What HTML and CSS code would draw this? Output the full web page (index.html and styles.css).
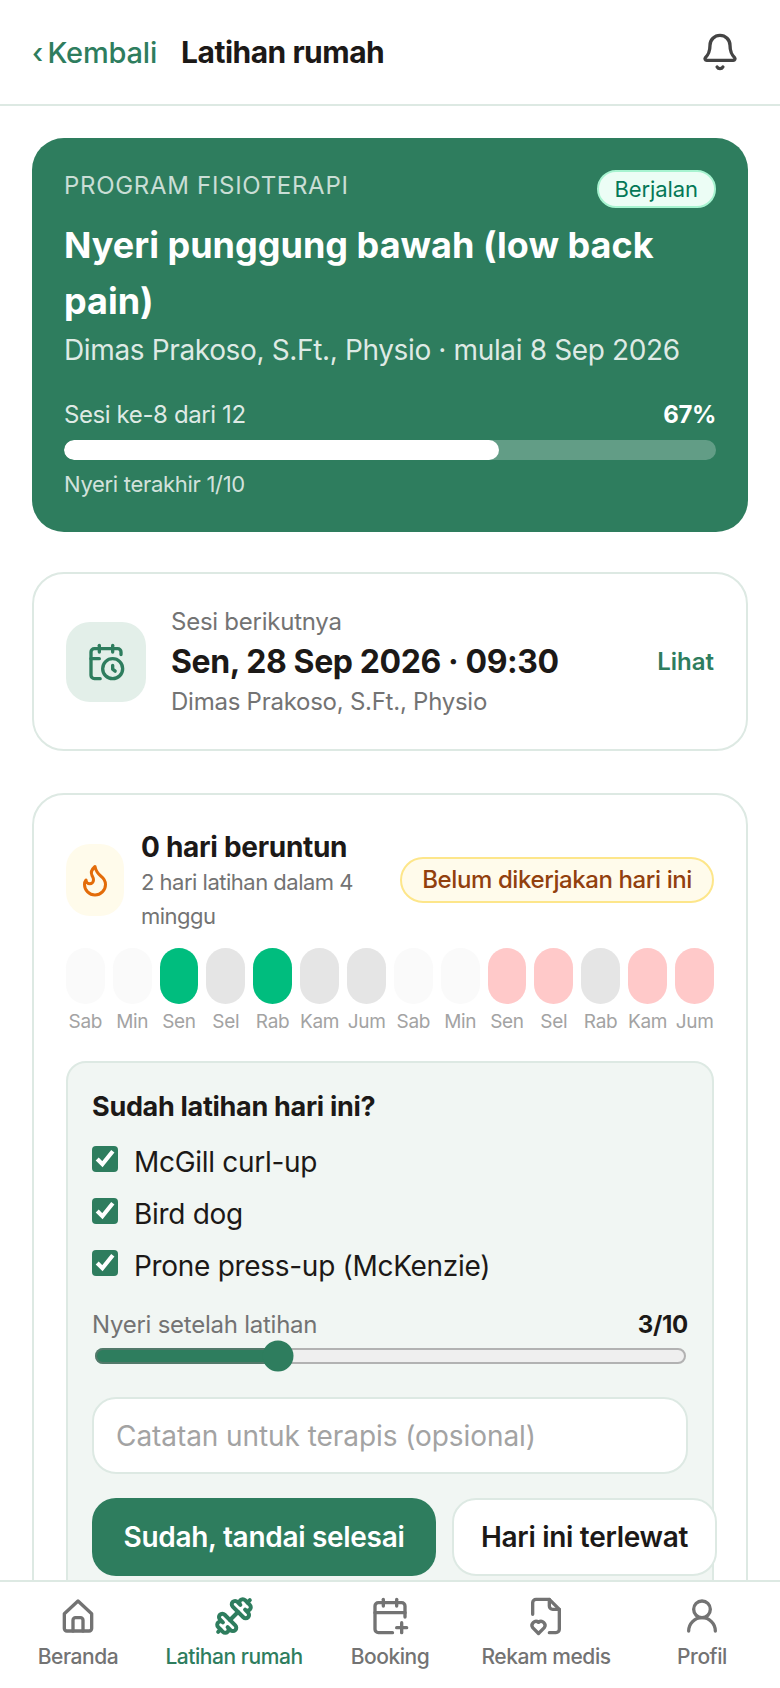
FILE: index.html
```html
<!DOCTYPE html>
<html lang="id">
<head>
  <meta charset="UTF-8">
  <meta name="viewport" content="width=device-width, initial-scale=1.0">
  <title>Latihan rumah</title>
  <link rel="stylesheet" href="styles.css">
</head>
<body>
  <header class="topbar">
    <a class="back" href="#"><span class="chev">‹</span> Kembali</a>
    <h1>Latihan rumah</h1>
    <svg class="bell" viewBox="0 0 24 24"><path d="M10.268 21a2 2 0 0 0 3.464 0"/><path d="M3.262 15.326A1 1 0 0 0 4 17h16a1 1 0 0 0 .74-1.673C19.41 13.956 18 12.499 18 8A6 6 0 0 0 6 8c0 4.499-1.411 5.956-2.738 7.326"/></svg>
  </header>

  <main class="content">
    <!-- Program aktif -->
    <section class="program">
      <div class="program-top">
        <span class="eyebrow">PROGRAM FISIOTERAPI</span>
        <span class="badge-run">Berjalan</span>
      </div>
      <h2>Nyeri punggung bawah (low back pain)</h2>
      <p class="program-sub">Dimas Prakoso, S.Ft., Physio · mulai 8 Sep 2026</p>
      <div class="progress-row">
        <span>Sesi ke-8 dari 12</span>
        <strong>67%</strong>
      </div>
      <div class="progress"><div class="progress-fill" style="width: 66.67%"></div></div>
      <p class="program-note">Nyeri terakhir 1/10</p>
    </section>

    <!-- Sesi berikutnya -->
    <section class="card next">
      <div class="next-icon">
        <svg viewBox="0 0 24 24"><path d="M21 7.5V6a2 2 0 0 0-2-2H5a2 2 0 0 0-2 2v14a2 2 0 0 0 2 2h3.5"/><path d="M16 2v4"/><path d="M8 2v4"/><path d="M3 10h5"/><path d="M17.5 17.5 16 16.3V14"/><circle cx="16" cy="16" r="6"/></svg>
      </div>
      <div class="next-text">
        <p class="muted">Sesi berikutnya</p>
        <p class="next-date">Sen, 28 Sep 2026 · 09:30</p>
        <p class="muted">Dimas Prakoso, S.Ft., Physio</p>
      </div>
      <a class="next-link" href="#">Lihat</a>
    </section>

    <!-- Streak dan form latihan -->
    <section class="card streak">
      <div class="streak-head">
        <div class="flame">
          <svg viewBox="0 0 24 24"><path d="M8.5 14.5A2.5 2.5 0 0 0 11 12c0-1.38-.5-2-1-3-1.072-2.143-.224-4.054 2-6 .5 2.5 2 4.9 4 6.5 2 1.6 3 3.5 3 5.5a7 7 0 1 1-14 0c0-1.153.433-2.294 1-3a2.5 2.5 0 0 0 2.5 2.5z"/></svg>
        </div>
        <div class="streak-text">
          <p class="streak-title">0 hari beruntun</p>
          <p class="streak-sub">2 hari latihan dalam 4 minggu</p>
        </div>
        <span class="badge-todo">Belum dikerjakan hari ini</span>
      </div>

      <div class="days">
        <div class="day"><i class="blank"></i><span>Sab</span></div>
        <div class="day"><i class="blank"></i><span>Min</span></div>
        <div class="day"><i class="done"></i><span>Sen</span></div>
        <div class="day"><i class="rest"></i><span>Sel</span></div>
        <div class="day"><i class="done"></i><span>Rab</span></div>
        <div class="day"><i class="rest"></i><span>Kam</span></div>
        <div class="day"><i class="rest"></i><span>Jum</span></div>
        <div class="day"><i class="blank"></i><span>Sab</span></div>
        <div class="day"><i class="blank"></i><span>Min</span></div>
        <div class="day"><i class="miss"></i><span>Sen</span></div>
        <div class="day"><i class="miss"></i><span>Sel</span></div>
        <div class="day"><i class="rest"></i><span>Rab</span></div>
        <div class="day"><i class="miss"></i><span>Kam</span></div>
        <div class="day"><i class="miss"></i><span>Jum</span></div>
      </div>

      <form class="today">
        <p class="today-title">Sudah latihan hari ini?</p>
        <label class="check"><input type="checkbox" checked> McGill curl-up</label>
        <label class="check"><input type="checkbox" checked> Bird dog</label>
        <label class="check"><input type="checkbox" checked> Prone press-up (McKenzie)</label>
        <div class="pain-row">
          <span>Nyeri setelah latihan</span>
          <strong>3/10</strong>
        </div>
        <input class="pain" type="range" min="0" max="10" value="3">
        <input class="note" type="text" placeholder="Catatan untuk terapis (opsional)">
        <div class="actions">
          <button class="btn-main" type="button">Sudah, tandai selesai</button>
          <button class="btn-alt" type="button">Hari ini terlewat</button>
        </div>
      </form>
    </section>
  </main>

  <nav class="tabs">
    <a class="tab" href="#">
      <svg viewBox="0 0 24 24"><path d="M3.8 10.6 12 3l8.2 7.6V19.5a1.5 1.5 0 0 1-1.5 1.5H5.3a1.5 1.5 0 0 1-1.5-1.5z"/><path d="M9 21v-6.5a1.5 1.5 0 0 1 1.5-1.5h3a1.5 1.5 0 0 1 1.5 1.5V21"/></svg>
      Beranda
    </a>
    <a class="tab active" href="#">
      <svg viewBox="0 0 24 24"><path d="M17.596 12.768a2 2 0 1 0 2.829-2.829l-1.768-1.767a2 2 0 0 0 2.828-2.829l-2.828-2.828a2 2 0 0 0-2.829 2.828l-1.767-1.768a2 2 0 1 0-2.829 2.829z"/><path d="m2.5 21.5 1.4-1.4"/><path d="m20.1 3.9 1.4-1.4"/><path d="M5.343 21.485a2 2 0 1 0 2.829-2.828l1.767 1.768a2 2 0 1 0 2.829-2.829l-6.364-6.364a2 2 0 1 0-2.829 2.829l1.768 1.767a2 2 0 0 0-2.828 2.829z"/><path d="m9.6 14.4 4.8-4.8"/></svg>
      Latihan rumah
    </a>
    <a class="tab" href="#">
      <svg viewBox="0 0 24 24"><path d="M16 19h6"/><path d="M16 2v4"/><path d="M19 16v6"/><path d="M21 12.598V6a2 2 0 0 0-2-2H5a2 2 0 0 0-2 2v14a2 2 0 0 0 2 2h8.5"/><path d="M3 10h18"/><path d="M8 2v4"/></svg>
      Booking
    </a>
    <a class="tab" href="#">
      <svg viewBox="0 0 24 24"><path d="M14 22h4a2 2 0 0 0 2-2V8l-6-6H6a2 2 0 0 0-2 2v7"/><path d="M14 2v4a2 2 0 0 0 2 2h4"/><path d="M7.5 22.5 4 19a2.4 2.4 0 0 1 3.5-3.2A2.4 2.4 0 0 1 11 19z"/></svg>
      Rekam medis
    </a>
    <a class="tab" href="#">
      <svg viewBox="0 0 24 24"><circle cx="12" cy="8" r="5"/><path d="M20 21a8 8 0 0 0-16 0"/></svg>
      Profil
    </a>
  </nav>
</body>
</html>
```

FILE: styles.css
```css
/* Estilo general */
* {
  box-sizing: border-box;
}

body {
  margin: 0;
  height: 100vh;
  overflow: hidden;
  display: flex;
  flex-direction: column;
  background: #fff;
  color: #1c1917;
  font-family: "Inter", "Noto Sans", sans-serif;
}

p, h1, h2 {
  margin: 0;
}

a {
  text-decoration: none;
}

svg {
  fill: none;
  stroke: currentColor;
  stroke-width: 2;
  stroke-linecap: round;
  stroke-linejoin: round;
}

/* Barra superior */
.topbar {
  flex: none;
  height: 106px;
  padding: 0 40px 0 32px;
  display: flex;
  align-items: center;
  gap: 24px;
  border-bottom: 2px solid #dde9e3;
}

.back {
  color: #2e7d5e;
  font-size: 29px;
  font-weight: 500;
  letter-spacing: -0.2px;
}

.chev {
  margin-right: -3px;
  font-size: 28px;
}

.topbar h1 {
  flex: 1;
  font-size: 30px;
  font-weight: 700;
  letter-spacing: -0.5px;
}

.bell {
  width: 40px;
  height: 40px;
  color: #444;
}

/* Contenido */
.content {
  flex: 1;
  min-height: 0;
  overflow: hidden;
  padding: 32px 32px 0;
}

.card {
  border: 2px solid #dde9e3;
  border-radius: 32px;
  background: #fff;
}

.muted {
  color: #737373;
  font-size: 24px;
  line-height: 32px;
  letter-spacing: -0.25px;
}

/* Programa */
.program {
  height: 394px;
  padding: 32px;
  border-radius: 32px;
  background: #2e7d5e;
  color: #fff;
}

.program-top {
  display: flex;
  justify-content: space-between;
  align-items: flex-start;
  height: 38px;
  margin-bottom: 9px;
}

.eyebrow {
  color: rgba(255, 255, 255, 0.75);
  font-size: 24px;
  line-height: 32px;
  letter-spacing: 0.7px;
}

.badge-run {
  padding: 4px 16px;
  border: 2px solid #a7f3d0;
  border-radius: 999px;
  background: #ecfdf5;
  color: #047857;
  font-size: 22px;
  line-height: 26px;
  letter-spacing: -0.1px;
}

.program h2 {
  font-size: 36px;
  line-height: 56px;
  font-weight: 700;
  letter-spacing: 0;
}

.program-sub {
  margin-top: 1px;
  color: rgba(255, 255, 255, 0.85);
  font-size: 28px;
  line-height: 40px;
  letter-spacing: -0.36px;
}

.progress-row {
  display: flex;
  justify-content: space-between;
  margin-top: 29px;
  color: rgba(255, 255, 255, 0.85);
  font-size: 24px;
  line-height: 32px;
  letter-spacing: -0.4px;
}

.progress-row strong {
  color: #fff;
  font-weight: 700;
}

.progress {
  height: 20px;
  margin-top: 9px;
  border-radius: 10px;
  background: rgba(255, 255, 255, 0.25);
  overflow: hidden;
}

.progress-fill {
  height: 100%;
  border-radius: 10px;
  background: #fff;
}

.program-note {
  margin-top: 8px;
  color: rgba(255, 255, 255, 0.8);
  font-size: 22px;
  line-height: 32px;
  letter-spacing: -0.3px;
}

/* Sesi berikutnya */
.next {
  height: 179px;
  margin-top: 40px;
  padding: 0 32px;
  display: flex;
  align-items: center;
  gap: 25px;
}

.next-icon {
  flex: none;
  width: 80px;
  height: 80px;
  border-radius: 24px;
  background: #e3efe9;
  color: #2e7d5e;
  display: flex;
  align-items: center;
  justify-content: center;
}

.next-icon svg {
  width: 40px;
  height: 40px;
}

.next-text {
  flex: 1;
}

.next-date {
  font-size: 32px;
  line-height: 48px;
  font-weight: 700;
  letter-spacing: -0.4px;
}

.next-link {
  color: #2e7d5e;
  font-size: 24px;
  font-weight: 600;
}

/* Racha */
.streak {
  margin-top: 42px;
  padding: 32px 32px 40px;
}

.streak-head {
  display: flex;
  align-items: center;
  gap: 17px;
}

.flame {
  flex: none;
  width: 58px;
  height: 72px;
  border-radius: 24px;
  background: #fffbeb;
  color: #e36c0a;
  display: flex;
  align-items: center;
  justify-content: center;
}

.flame svg {
  width: 36px;
  height: 36px;
}

.streak-text {
  flex: 1;
  min-width: 0;
}

.streak-title {
  margin-bottom: -2px;
  font-size: 28px;
  line-height: 40px;
  font-weight: 700;
  letter-spacing: -0.3px;
}

.streak-sub {
  color: #737373;
  font-size: 22px;
  line-height: 34px;
  letter-spacing: -0.5px;
}

.badge-todo {
  flex: none;
  padding: 6px 20px;
  border: 2px solid #fde68a;
  border-radius: 999px;
  background: #fffbeb;
  color: #92400e;
  font-size: 24px;
  line-height: 30px;
  font-weight: 500;
  letter-spacing: -0.4px;
}

.days {
  display: grid;
  grid-template-columns: repeat(14, 1fr);
  gap: 8px;
  margin-top: 15px;
}

.day i {
  display: block;
  height: 56px;
  border-radius: 20px;
}

.day span {
  display: block;
  margin-top: 6px;
  color: #a3a3a3;
  font-size: 19px;
  line-height: 24px;
  text-align: center;
  letter-spacing: -0.3px;
}

.blank { background: #fafafa; }
.done { background: #00bd7e; }
.rest { background: #e5e5e5; }
.miss { background: #ffc9c9; }

/* Form hari ini */
.today {
  margin-top: 27px;
  padding: 24px;
  border: 2px solid #dde9e3;
  border-radius: 20px;
  background: #f1f6f3;
}

.today-title {
  margin-bottom: 15px;
  font-size: 27px;
  line-height: 40px;
  font-weight: 700;
  letter-spacing: -0.3px;
}

.check {
  display: flex;
  align-items: center;
  gap: 16px;
  height: 40px;
  margin-bottom: 12px;
  font-size: 28px;
  letter-spacing: -0.3px;
}

.check input {
  zoom: 2;
  width: 13px;
  height: 13px;
  margin: 0 0 3px;
  accent-color: #2e7d5e;
}

.pain-row {
  display: flex;
  justify-content: space-between;
  margin-top: 23px;
  color: #737373;
  font-size: 24px;
  line-height: 31px;
  letter-spacing: -0.25px;
}

.pain-row strong {
  color: #1c1917;
  font-weight: 700;
}

.pain {
  zoom: 2;
  display: block;
  width: 296.5px;
  height: 16px;
  margin: 0 1px;
  accent-color: #2e7d5e;
}

.note {
  display: block;
  width: 100%;
  height: 77px;
  margin-top: 25px;
  padding: 0 22px;
  border: 2px solid #dde9e3;
  border-radius: 24px;
  background: #fff;
  font: inherit;
  font-size: 28px;
  letter-spacing: -0.07px;
}

.note::placeholder {
  color: #a3a3a3;
}

.actions {
  display: flex;
  gap: 16px;
  margin-top: 24px;
}

.actions button {
  flex: none;
  height: 78px;
  border-radius: 24px;
  font-family: inherit;
  font-size: 28px;
  font-weight: 600;
  letter-spacing: -0.3px;
}

.btn-main {
  width: 344px;
  border: 0;
  background: #2e7d5e;
  color: #fff;
}

.btn-alt {
  width: 265px;
  border: 2px solid #dde9e3;
  background: #fff;
  color: #1c1917;
}

/* Navegacion inferior */
.tabs {
  flex: none;
  height: 108px;
  border-top: 2px solid #dde9e3;
  background: #fff;
  display: grid;
  grid-template-columns: repeat(5, 1fr);
}

.tab {
  display: flex;
  flex-direction: column;
  align-items: center;
  padding-top: 14px;
  color: #737373;
  font-size: 21px;
  line-height: 28px;
  font-weight: 500;
  letter-spacing: -0.45px;
}

.tab svg {
  width: 40px;
  height: 40px;
  margin-bottom: 7px;
}

.tab.active {
  color: #2e7d5e;
}

.tab.active svg {
  stroke-width: 2.4;
}
```
